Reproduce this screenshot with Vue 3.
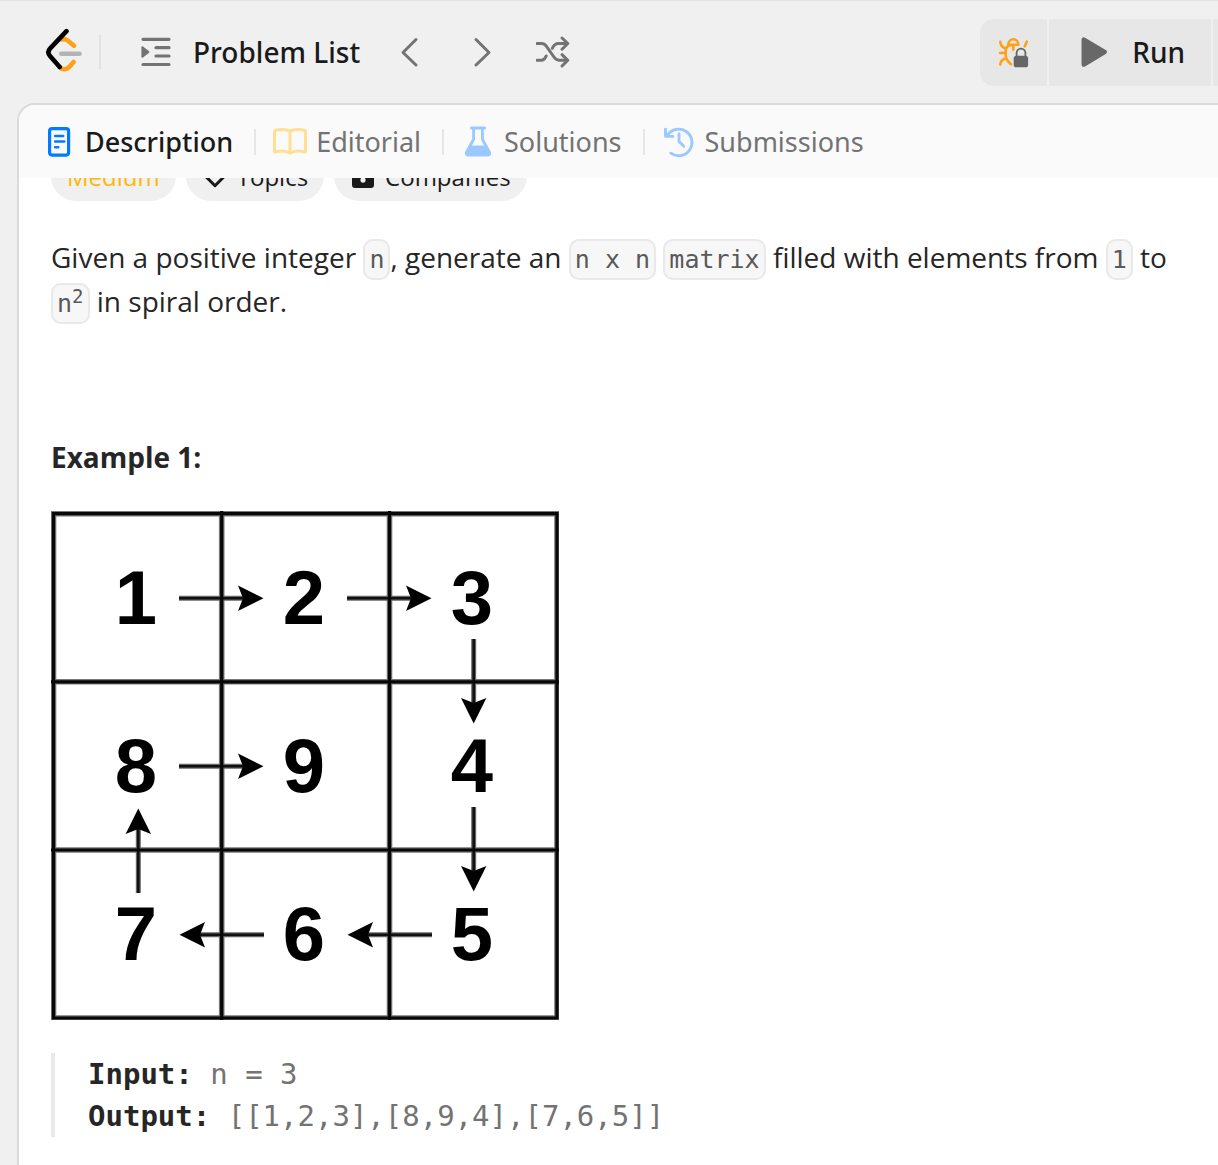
<script setup>
const digits = [
  { value: 1, col: 0, row: 0 },
  { value: 2, col: 1, row: 0 },
  { value: 3, col: 2, row: 0 },
  { value: 8, col: 0, row: 1 },
  { value: 9, col: 1, row: 1 },
  { value: 4, col: 2, row: 1 },
  { value: 7, col: 0, row: 2 },
  { value: 6, col: 1, row: 2 },
  { value: 5, col: 2, row: 2 }
]

// Each arrow starts at (x, y) and is turned clockwise by `turn` degrees.
const arrows = [
  { x: 128, y: 87, turn: 0 },
  { x: 296, y: 87, turn: 0 },
  { x: 128, y: 255, turn: 0 },
  { x: 423, y: 128, turn: 90 },
  { x: 423, y: 296, turn: 90 },
  { x: 381, y: 424, turn: 180 },
  { x: 213, y: 424, turn: 180 },
  { x: 87, y: 382, turn: 270 }
]
</script>

<template>
  <div class="page">
    <header class="topbar">
      <a class="logo" href="#" aria-label="Home">
        <svg width="36" height="44" viewBox="0 0 36 44" fill="none" stroke-width="4.6" stroke-linecap="round">
          <path d="M15.500 11.500c2.500-.8 4.500-.2 6.500 1.300l6 5" stroke="#ffa116" />
          <path d="M13.500 39c3 3 7 2.600 9.800 0l4.300-5" stroke="#ffa116" />
          <path d="M15.300 25.700h18.200" stroke="#b3b3b3" />
          <path d="M20.500 3.200L4.200 20.300c-2.200 2.400-2.400 5.200-.2 7.700l9.700 11" stroke="#000" />
        </svg>
      </a>
      <span class="rule"></span>
      <button class="list" type="button">
        <svg width="32" height="32" viewBox="0 0 32 32" fill="none" stroke="#737373" stroke-width="3.200" stroke-linecap="round">
          <path d="M3 3.300h26M16 11.700h13M16 20h13M3 28.500h26" />
          <path d="M2.200 11v10L8.600 16z" fill="#737373" stroke-width="1.600" stroke-linejoin="round" />
        </svg>
        Problem List
      </button>
      <nav class="steps" aria-label="Problems">
        <button type="button" aria-label="Previous problem">
          <svg width="36" height="36" viewBox="0 0 36 36" fill="none" stroke="#737373" stroke-width="3" stroke-linecap="round" stroke-linejoin="round"><path d="M24 5.500L11 18.500l13 12.500" /></svg>
        </button>
        <button type="button" aria-label="Next problem">
          <svg width="36" height="36" viewBox="0 0 36 36" fill="none" stroke="#737373" stroke-width="3" stroke-linecap="round" stroke-linejoin="round"><path d="M12 5.500l13 13-13 12.500" /></svg>
        </button>
        <button type="button" aria-label="Random problem">
          <svg width="36" height="36" viewBox="5 0 36 36" fill="none" stroke="#737373" stroke-width="3" stroke-linecap="round" stroke-linejoin="round">
            <path d="M6 9.500h4.500c2.500 0 3.500 1 4.800 2.700l8 11.300c1.400 1.900 2.800 2.800 5.300 2.800h7.400" />
            <path d="M6 26.300h4.200c2.300 0 3.600-1 5-4.300" />
            <path d="M21.300 14.300c1.500-3.300 3.200-4.800 6-4.800h8.700" />
            <path d="M31 4l5.800 5.500-5.800 5.700M31 20.700l5.800 5.600-5.800 5.700" />
          </svg>
        </button>
      </nav>
      <div class="actions">
        <button class="debug" type="button" aria-label="Debug">
          <svg width="34" height="34" viewBox="0 0 34 34" fill="none">
            <g stroke="#ffa116" stroke-width="2.600" stroke-linecap="round" stroke-linejoin="round">
              <path d="M11.300 9.800a5 5.500 0 0 1 10 0zM16.300 10v4.600" />
              <path d="M13.500 10.300c-3 .6-4.800 2.500-4.800 5.700v4c0 2.500.8 4.500 2.200 6l3.100 3.300" />
              <path d="M3.300 6.700c0 3.300 1.600 5.300 5.200 6.800M3 18h5.700M3.300 29.500c0-3.300 2-5 5.500-6.300M29.800 6.700l-2 4.600" />
            </g>
            <path d="M19.600 21v-3a4.400 4.400 0 0 1 8.800 0v3" stroke="#666" stroke-width="1.800" />
            <rect x="16.700" y="20.700" width="14.400" height="11.600" rx="2.600" fill="#666" />
          </svg>
        </button>
        <button class="run" type="button">
          <svg width="28" height="34" viewBox="0 0 28 34" fill="#686868"><path d="M1.500 5c0-2.500 2-3.300 4-2.100l20.200 12.200c1.700 1 1.700 2.700 0 3.800L5.500 31.200c-2 1.200-4 .4-4-2z" /></svg>
          Run
        </button>
        <span class="more"></span>
      </div>
    </header>

    <main class="panel">
      <nav class="tabs" aria-label="Problem tabs">
        <button class="tab active" type="button">
          <svg width="34" height="34" viewBox="0 0 34 34" fill="none" stroke="#007aff" stroke-width="3.200" stroke-linecap="round">
            <rect x="7.600" y="3.600" width="19" height="26.500" rx="2.500" />
            <path d="M13.200 11h8M13.200 16.500h9M13.200 22.200h3" stroke-width="2.600" />
          </svg>
          Description
        </button>
        <span class="sep"></span>
        <button class="tab" type="button">
          <svg width="34" height="34" viewBox="0 1 34 34" fill="none" stroke="#ffdf94" stroke-width="3" stroke-linejoin="round">
            <path d="M17 7.500c-2-1.600-4.500-1.900-7.500-1.900-3 0-5 .2-7.300.9-.5.200-.7.500-.7 1.100v19.600c0 .7.400 1 1.100.8 4.900-1.400 10.400-1.100 14.400 1.300 4-2.400 9.500-2.700 14.400-1.300.7.200 1.100-.1 1.100-.8V7.600c0-.6-.2-.9-.7-1.100-2.300-.7-4.300-.9-7.300-.9s-5.500.3-7.500 1.900zM17 7.500v20.300" />
          </svg>
          Editorial
        </button>
        <span class="sep"></span>
        <button class="tab" type="button">
          <svg width="34" height="34" viewBox="0 1 34 34" fill="#99c9ff">
            <path d="M10.500 2.600h13a1.500 1.500 0 0 1 0 3h-.7v8.200c0 .8.200 1.500.6 2.200l6.300 11.500c1.200 2.400-.2 5-2.800 5H7.100c-2.600 0-4-2.600-2.800-5L10.600 16c.4-.7.6-1.400.6-2.200V5.600h-.7a1.500 1.500 0 0 1 0-3zm3.500 3v8.900c0 .8-.2 1.600-.6 2.300l-2.500 4.700h12.200l-2.500-4.700c-.4-.7-.6-1.500-.6-2.300V5.600z" />
          </svg>
          Solutions
        </button>
        <span class="sep"></span>
        <button class="tab" type="button">
          <svg width="34" height="34" viewBox="0 1 34 34" fill="none" stroke="#99c9ff" stroke-width="2.900" stroke-linecap="round" stroke-linejoin="round">
            <path d="M8.800 29.200A13.300 13.300 0 1 0 5.200 11.700M3.500 5.200v7.200h7.300M17 10v7.500l4.800 4.700" />
          </svg>
          Submissions
        </button>
      </nav>

      <section class="content">
        <div class="pills">
          <span class="pill">Medium</span>
          <button class="pill" type="button">
            <svg width="26" height="26" viewBox="0 0 26 26" fill="none" stroke="#1a1a1a" stroke-width="3" stroke-linecap="round" stroke-linejoin="round"><path d="M13 22.700l-9-9c-3-3.500-.8-9.500 4.500-9.500h9c5.300 0 7.500 6 4.500 9.500z" /></svg>
            Topics
          </button>
          <button class="pill" type="button">
            <svg width="26" height="26" viewBox="0 0 26 26">
              <path d="M7.500 11V7.500a5.500 5.500 0 0 1 11 0V11" fill="none" stroke="#1a1a1a" stroke-width="3" />
              <path d="M5 10h16a3 3 0 0 1 3 3v9a3 3 0 0 1-3 3H5a3 3 0 0 1-3-3v-9a3 3 0 0 1 3-3zm8 4.500a2.600 2.600 0 1 0 0 5.200a2.600 2.600 0 0 0 0-5.200z" fill="#1a1a1a" fill-rule="evenodd" />
            </svg>
            Companies
          </button>
        </div>

        <p class="statement">
          Given a positive integer <code>n</code>, generate an <code>n x n</code> <code>matrix</code> filled with elements from <code>1</code> to <code>n<sup>2</sup></code> in spiral order.
        </p>

        <h2>Example 1:</h2>

        <svg class="diagram" width="508" height="509" viewBox="0 0 508 509" role="img" aria-label="Spiral order in a 3 by 3 matrix">
          <rect width="508" height="509" fill="#fff" />
          <path class="edge" d="M2.500 2.700h503.500v504.300h-503.500zM170.700 0v509M338.500 0v509M0 170.800h508M0 339h508" />
          <g v-for="(a, i) in arrows" :key="i" :transform="`translate(${a.x} ${a.y}) rotate(${a.turn})`">
            <path d="M0 .3h66" stroke="#666" stroke-width="5" />
            <path d="M0 .3h66" stroke="#111" stroke-width="2.600" />
            <path d="M84.500 .3L59 13l5-12.700-5-12.700z" />
          </g>
          <path class="line" d="M2.500 2.700h503.500v504.300h-503.500zM170.700 0v509M338.500 0v509M0 170.800h508M0 339h508" />
          <text v-for="d in digits" :key="d.value" :x="85 + d.col * 168" :y="113 + d.row * 168">{{ d.value }}</text>
        </svg>

        <pre class="io"><strong>Input:</strong> n = 3
<strong>Output:</strong> [[1,2,3],[8,9,4],[7,6,5]]</pre>
      </section>
    </main>
  </div>
</template>

<style>
body {
  margin: 0;
  background: #f0f0f0;
}
</style>

<style scoped>
.page {
  box-sizing: border-box;
  display: flex;
  flex-direction: column;
  min-height: 100vh;
  overflow: hidden;
  border-top: 1px solid #e2e2e2;
  background: #f0f0f0;
  color: #262626;
  font-family: "Open Sans", "Noto Sans", sans-serif;
}
button {
  display: flex;
  align-items: center;
  margin: 0;
  padding: 0;
  border: 0;
  background: none;
  color: inherit;
  font: inherit;
  white-space: nowrap;
}
svg {
  flex: none;
  display: block;
}
.topbar {
  display: flex;
  align-items: center;
  height: 102px;
  padding-left: 46px;
  color: #1a1a1a;
  font-family: "Noto Sans", sans-serif;
  font-size: 28px;
  font-weight: 500;
}
.logo {
  margin-top: -4px;
}
.rule {
  width: 2px;
  height: 34px;
  margin: 0 39px 0 17px;
  background: #e2e2e2;
}
.list {
  gap: 21px;
}
.steps {
  display: flex;
  gap: 36px;
  margin-left: 32px;
}
.actions {
  display: flex;
  gap: 2px;
  height: 67px;
  margin-left: auto;
  overflow: hidden;
  border-radius: 14px 0 0 14px;
}
.debug {
  justify-content: center;
  width: 67px;
  background: #e7e7e7;
}
.run {
  gap: 24px;
  padding: 0 26px 0 31px;
  background: #e7e7e7;
}
.more {
  width: 5px;
  background: #e7e7e7;
}
.panel {
  flex: 1;
  display: flex;
  flex-direction: column;
  margin-left: 17px;
  overflow: hidden;
  border: solid #dadada;
  border-width: 2px 0 0 2px;
  border-radius: 18px 0 0 0;
  background: #fff;
}
.tabs {
  position: relative;
  display: flex;
  align-items: center;
  height: 73px;
  padding-left: 23px;
  background: #fafafa;
  color: #737373;
  font-family: "Noto Sans", sans-serif;
  font-size: 27px;
}
.tab {
  gap: 9px;
}
.active {
  color: #1a1a1a;
  font-weight: 500;
}
.sep {
  width: 2px;
  height: 26px;
  margin: 0 17px 0 21px;
  background: #e6e6e6;
}
.content {
  padding: 0 32px 28px 32px;
  overflow: hidden;
}
.pills {
  display: flex;
  gap: 10px;
  margin-top: -27px;
}
.pill {
  display: flex;
  align-items: center;
  gap: 9px;
  height: 50px;
  padding: 0 16px;
  border-radius: 25px;
  background: #f0f0f0;
  color: #1a1a1a;
  font-size: 24px;
}
.pill:first-child {
  color: #ffb800;
}
.statement {
  margin: 34px 0 0;
  font-size: 28px;
  line-height: 44px;
}
code {
  padding: 4px;
  border: 2px solid #e9e9e9;
  border-radius: 10px;
  background: #f7f7f7;
  color: #595959;
  font: 25px/28px "DejaVu Sans Mono", monospace;
}
sup {
  font-size: 19px;
  line-height: 0;
}
h2 {
  margin: 112px 0 0;
  font-size: 28px;
  font-weight: 700;
  line-height: 44px;
}
.diagram {
  margin-top: 32px;
}
.diagram text {
  font: 700 76px "Liberation Sans", Arial, sans-serif;
  text-anchor: middle;
}
.edge,
.line {
  fill: none;
  stroke: #777;
  stroke-width: 5.6px;
}
.line {
  stroke: #080808;
  stroke-width: 3.2px;
}
.io {
  margin: 33px 0 0;
  padding-left: 33px;
  border-left: 4px solid #e9e9e9;
  color: #737373;
  font: 29px/42px "DejaVu Sans Mono", monospace;
}
.io strong {
  color: #262626;
}
</style>
